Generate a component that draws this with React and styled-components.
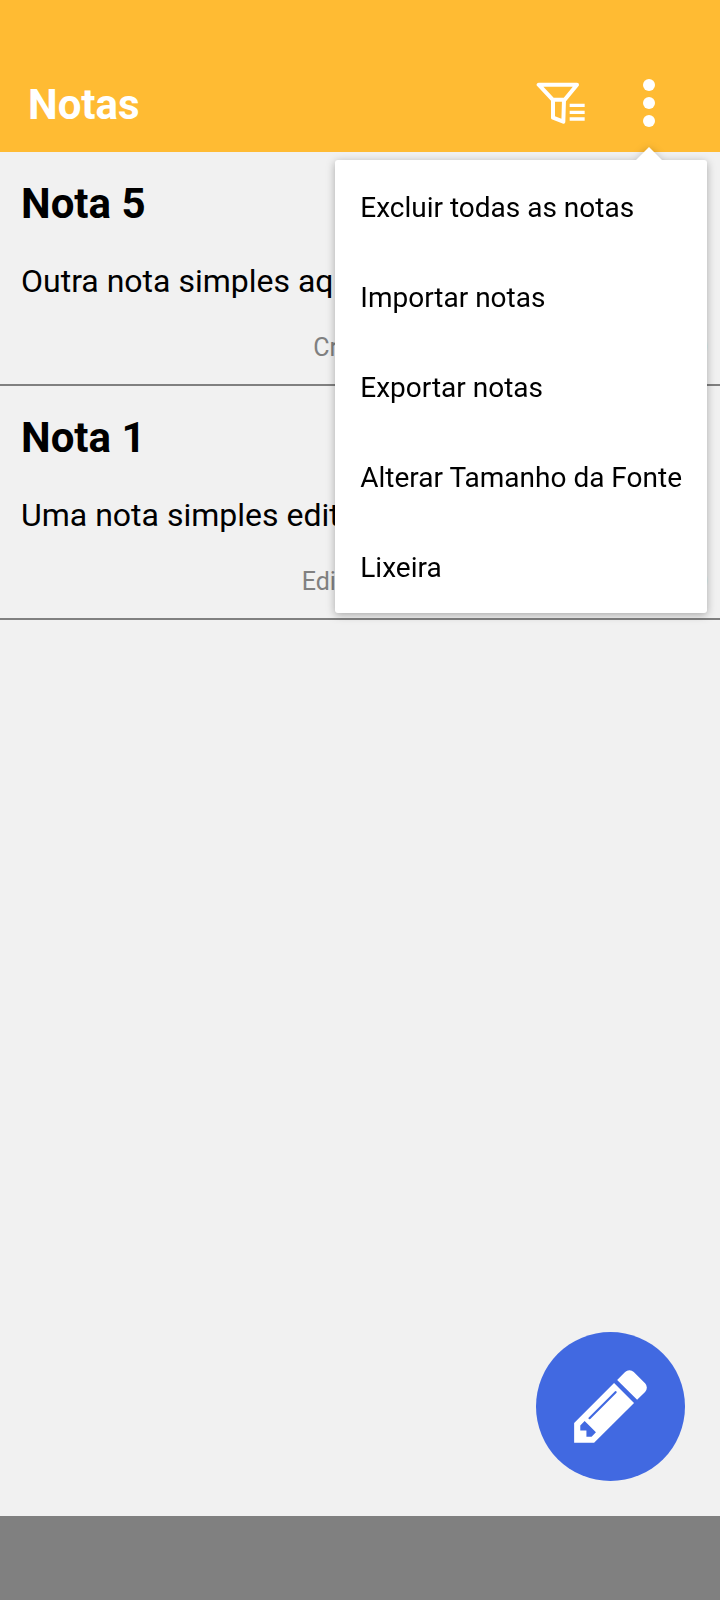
import React from "react";
import styled, { createGlobalStyle } from "styled-components";

const GlobalStyle = createGlobalStyle`
  *, *::before, *::after { box-sizing: border-box; }
  body { margin: 0; background: #f1f1f1; }
  body, button { font-family: Roboto, "Liberation Sans", sans-serif; }
`;

const Page = styled.div`
  display: flex;
  flex-direction: column;
  min-height: 100vh;
  background: #f1f1f1;
  color: #000;
`;

const Header = styled.header`
  position: relative;
  z-index: 2;
  display: flex;
  align-items: center;
  padding: 54px 40px 0 28px;
  height: 152px;
  background: #ffbb33;
`;

const Title = styled.h1`
  flex: 1;
  margin: 0;
  padding-top: 4px;
  color: #fff;
  font-size: 42px;
  line-height: 48px;
  font-weight: 700;
`;

const Actions = styled.div`
  display: flex;
  align-items: center;
  gap: 26px;
`;

const IconButton = styled.button`
  display: flex;
  align-items: center;
  justify-content: center;
  width: 62px;
  height: 62px;
  padding: 0;
  border: 0;
  background: transparent;
  color: #fff;
`;

const Menu = styled.div`
  position: absolute;
  top: 160px;
  right: 13px;
  display: flex;
  flex-direction: column;
  padding-top: 3px;
  border-radius: 3px;
  background: #fff;
  filter: drop-shadow(0 2px 4px rgba(0, 0, 0, 0.3));

  &::before {
    content: "";
    position: absolute;
    top: -13px;
    right: 45px;
    border: solid transparent;
    border-width: 0 13px 13px;
    border-bottom-color: #fff;
  }
`;

const MenuItem = styled.button`
  height: 90px;
  padding: 0 25px;
  border: 0;
  background: transparent;
  color: #000;
  font-size: 28px;
  line-height: 32px;
  text-align: left;
  white-space: nowrap;
`;

const NoteList = styled.main`
  position: relative;
  flex: 1;
`;

const Note = styled.article`
  display: flex;
  flex-direction: column;
  padding: 28px 12px 21px 21px;
  border-bottom: 2px solid #808080;
`;

const NoteTitle = styled.h2`
  margin: 0 0 34px;
  font-size: 42px;
  line-height: 48px;
  font-weight: 700;
`;

const NoteText = styled.p`
  margin: 0 0 33px;
  font-size: 32px;
  line-height: 38px;
`;

const NoteDate = styled.p`
  margin: 0;
  color: #808080;
  font-size: 25px;
  line-height: 30px;
  text-align: right;
`;

const AddButton = styled.button`
  position: absolute;
  right: 35px;
  bottom: 35px;
  display: flex;
  align-items: center;
  justify-content: center;
  width: 149px;
  height: 149px;
  padding: 0 0 2px;
  border: 0;
  border-radius: 50%;
  background: #4169e1;
  color: #fff;
`;

const BottomBar = styled.footer`
  height: 84px;
  background: #808080;
`;

const FilterIcon = () => (
  <svg width="50" height="44" viewBox="0 0 150 132" fill="none" stroke="currentColor" strokeWidth="12" strokeLinejoin="round" aria-hidden="true">
    <path d="M8 11H123L86 56H50Z" />
    <path d="M51 56V110L82 122L84 56" />
    <path d="M101 73H146M101 94H146M101 114H146" strokeWidth="10" />
  </svg>
);

const MoreIcon = () => (
  <svg width="12" height="50" viewBox="0 0 12 50" fill="currentColor" aria-hidden="true">
    <circle cx="6" cy="7" r="6" />
    <circle cx="6" cy="25" r="6" />
    <circle cx="6" cy="43" r="6" />
  </svg>
);

const PencilIcon = () => (
  <svg width="86" height="86" viewBox="0 0 1792 1792" fill="currentColor" aria-hidden="true">
    <path d="M491 1536l91-91-235-235-91 91v107h128v128h107zM1014 608q0-22-22-22-10 0-17 7l-542 542q-7 7-7 17 0 22 22 22 10 0 17-7l542-542q7-7 7-17zM960 416l416 416-832 832h-416v-416zM1643 512q0 53-37 90l-166 166-416-416 166-165q36-38 90-38 53 0 91 38l235 234q37 39 37 91z" />
  </svg>
);

const menuItems = [
  "Excluir todas as notas",
  "Importar notas",
  "Exportar notas",
  "Alterar Tamanho da Fonte",
  "Lixeira",
];

const notes = [
  { title: "Nota 5", text: "Outra nota simples aqui", date: "Criado em: 10/04/2022 às 10:20:00" },
  { title: "Nota 1", text: "Uma nota simples editada", date: "Editado em: 10/04/2022 às 10:20:00" },
];

export default function App() {
  return (
    <Page>
      <GlobalStyle />
      <Header>
        <Title>Notas</Title>
        <Actions>
          <IconButton type="button" aria-label="Filtrar">
            <FilterIcon />
          </IconButton>
          <IconButton type="button" aria-label="Mais" aria-haspopup="menu" aria-expanded="true">
            <MoreIcon />
          </IconButton>
        </Actions>
        <Menu role="menu">
          {menuItems.map((label) => (
            <MenuItem key={label} type="button" role="menuitem">
              {label}
            </MenuItem>
          ))}
        </Menu>
      </Header>
      <NoteList>
        {notes.map((note) => (
          <Note key={note.title}>
            <NoteTitle>{note.title}</NoteTitle>
            <NoteText>{note.text}</NoteText>
            <NoteDate>{note.date}</NoteDate>
          </Note>
        ))}
        <AddButton type="button" aria-label="Nova nota">
          <PencilIcon />
        </AddButton>
      </NoteList>
      <BottomBar />
    </Page>
  );
}
